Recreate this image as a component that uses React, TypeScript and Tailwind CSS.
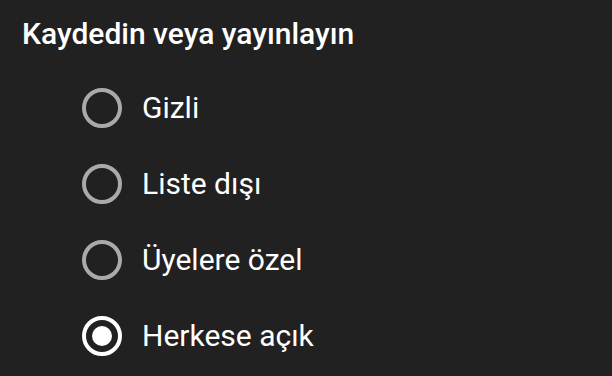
import React from "react";

const options = [
  { label: "Gizli", checked: false },
  { label: "Liste dışı", checked: false },
  { label: "Üyelere özel", checked: false },
  { label: "Herkese açık", checked: true },
];

export default function App() {
  return (
    <div
      className="w-[612px] h-[376px] bg-[#212121] text-white overflow-hidden"
      style={{ fontFamily: "Roboto, 'Noto Sans', Arial, sans-serif" }}
    >
      <div className="pt-4 pl-[22px] text-[30px] leading-[36px] font-medium">
        Kaydedin veya yayınlayın
      </div>
      <div className="mt-[18px] flex flex-col pl-[82px]">
        {options.map((o) => (
          <div key={o.label} className="h-[76px] flex items-center gap-[20px]">
            <div
              className={
                o.checked
                  ? "w-10 h-10 rounded-full border-4 border-white flex items-center justify-center"
                  : "w-10 h-10 rounded-full border-4 border-[#aaaaaa] flex items-center justify-center"
              }
            >
              {o.checked && <div className="w-5 h-5 rounded-full bg-white" />}
            </div>
            <span className="text-[30px] leading-[36px]">{o.label}</span>
          </div>
        ))}
      </div>
    </div>
  );
}
